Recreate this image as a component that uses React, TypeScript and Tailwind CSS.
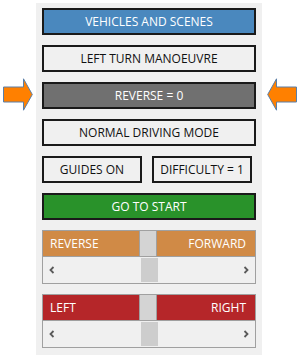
import React from "react";

function Arrow({ dir }: { dir: "right" | "left" }) {
  return (
    <svg width="30" height="33" viewBox="0 0 30 33" className={dir === "left" ? "-scale-x-100" : ""}>
      <polygon
        points="0.5,9 20.5,9 20.5,0.8 29.3,16.5 20.5,32.2 20.5,24 0.5,24"
        fill="#ff8000"
        stroke="#5a7fa8"
        strokeWidth="1"
      />
    </svg>
  );
}

function Chevron({ dir }: { dir: "left" | "right" }) {
  return (
    <svg width="8" height="8" viewBox="0 0 8 8">
      <polyline
        points={dir === "left" ? "5.5,1 2.5,4 5.5,7" : "2.5,1 5.5,4 2.5,7"}
        fill="none"
        stroke="#5a5a5a"
        strokeWidth="1.8"
      />
    </svg>
  );
}

function Btn({ children, cls }: { children: React.ReactNode; cls: string }) {
  return (
    <div className={`flex h-[27px] items-center justify-center border-2 border-[#1a1a1a] text-[12px] ${cls}`}>
      {children}
    </div>
  );
}

function Slider({ left, right, color }: { left: string; right: string; color: string }) {
  return (
    <div className="flex flex-col border border-[#a0a0a0]">
      <div className="flex h-[25px]">
        <div className={`flex flex-1 items-center pl-[7px] text-[12px] text-white ${color}`}>{left}</div>
        <div className="w-[18px] border-x border-[#a0a0a0] bg-[#d4d4d4]" />
        <div className={`flex flex-1 items-center justify-end pr-[9px] text-[12px] text-white ${color}`}>{right}</div>
      </div>
      <div className="flex h-[27px] items-center border-t border-[#a0a0a0] bg-[#f0f0f0]">
        <div className="flex flex-1 items-center pl-[5px]">
          <Chevron dir="left" />
        </div>
        <div className="h-[24px] w-[17px] bg-[#cdcdcd]" />
        <div className="flex flex-1 items-center justify-end pr-[5px]">
          <Chevron dir="right" />
        </div>
      </div>
    </div>
  );
}

export default function App() {
  return (
    <div
      className="flex h-[360px] w-[299px] bg-white"
      style={{ fontFamily: '"Open Sans", "Noto Sans", sans-serif' }}
    >
      <div className="w-[36px] pl-[3px] pt-[78px]">
        <Arrow dir="right" />
      </div>
      <div className="mt-[3px] flex h-[352px] w-[226px] flex-col gap-[10px] bg-[#f0f0f0] px-[6px] pt-[5px]">
        <Btn cls="bg-[#4a88be] text-white">VEHICLES AND SCENES</Btn>
        <Btn cls="bg-[#f0f0f0] text-[#111]">LEFT TURN MANOEUVRE</Btn>
        <Btn cls="bg-[#707070] text-white">REVERSE = 0</Btn>
        <Btn cls="bg-[#f0f0f0] text-[#111]">NORMAL DRIVING MODE</Btn>
        <div className="flex gap-[10px]">
          <Btn cls="w-[100px] bg-[#f0f0f0] text-[#111]">GUIDES ON</Btn>
          <Btn cls="w-[100px] bg-[#f0f0f0] text-[#111]">DIFFICULTY = 1</Btn>
        </div>
        <Btn cls="bg-[#29922a] text-white">GO TO START</Btn>
        <Slider left="REVERSE" right="FORWARD" color="bg-[#d08a46]" />
        <Slider left="LEFT" right="RIGHT" color="bg-[#b52629]" />
      </div>
      <div className="pl-[5px] pt-[78px]">
        <Arrow dir="left" />
      </div>
    </div>
  );
}
